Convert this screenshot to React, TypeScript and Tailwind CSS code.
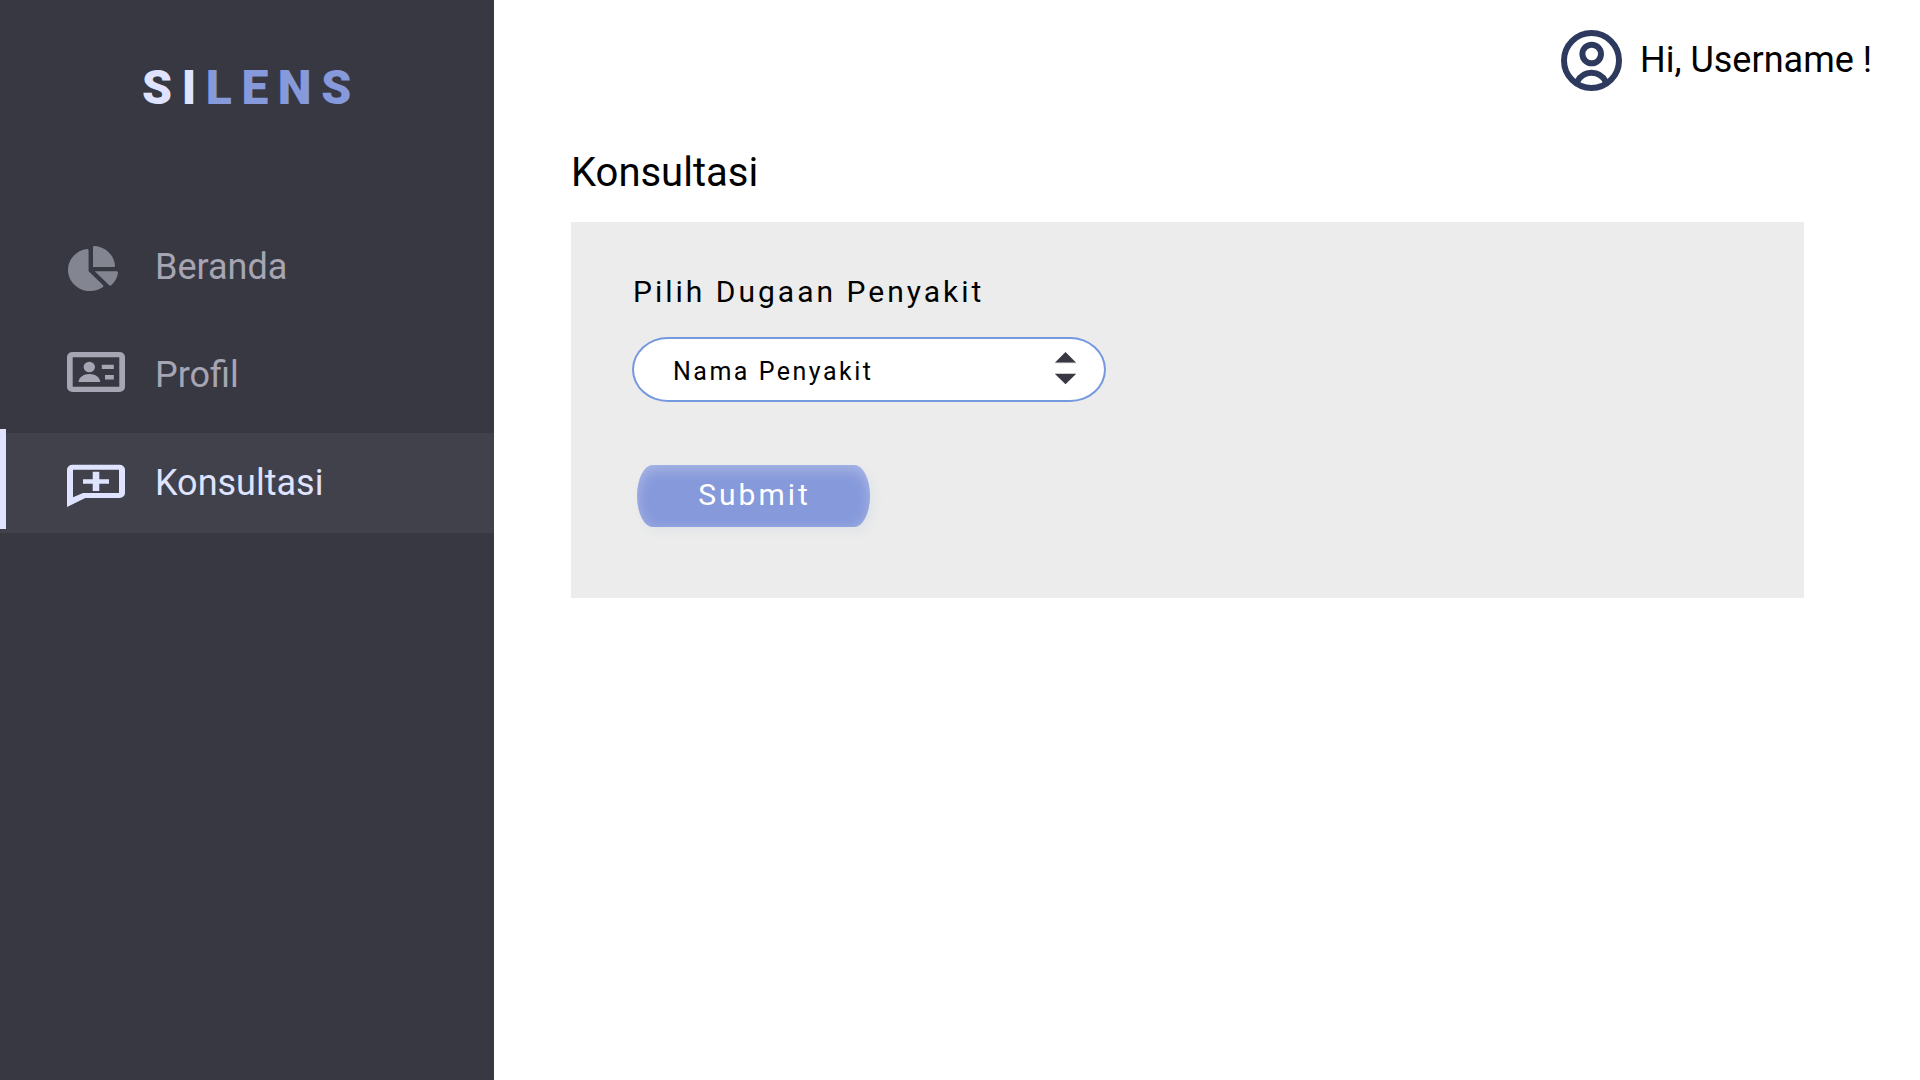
import type { ReactNode } from "react";

function PieIcon() {
  return (
    <svg width="50" height="45" viewBox="0 0 544 512" preserveAspectRatio="none" fill="#838590">
      <path d="M527.79 288H290.5l158.03 158.03c6.04 6.04 15.98 6.53 22.19.68 38.7-36.46 65.32-85.61 73.13-140.86 1.34-9.46-6.51-17.85-16.06-17.85zm-15.83-64.8C503.72 103.74 408.26 8.28 288.8.04 279.68-.59 272 7.1 272 16.24V240h223.77c9.14 0 16.82-7.68 16.19-16.8zM224 288V50.71c0-9.55-8.39-17.4-17.84-16.06C86.99 51.49-4.1 155.6.14 280.37 4.5 408.51 114.83 513.59 243.03 511.98c50.4-.63 96.97-16.87 135.26-44.03 7.9-5.6 8.42-17.23 1.57-24.08L224 288z" />
    </svg>
  );
}

function IdCardIcon() {
  return (
    <svg width="58" height="40" viewBox="0 0 58 40" fill="#a5a5b4">
      <path
        fillRule="evenodd"
        d="M5.5 0h47A5.5 5 0 0 1 58 5v30a5.5 5 0 0 1-5.5 5h-47A5.5 5 0 0 1 0 35V5A5.5 5 0 0 1 5.5 0zM5.7 5.2v29.6h46.6V5.2z"
      />
      <ellipse cx="22.3" cy="15" rx="5.7" ry="5.2" />
      <path d="M11.5 30C12 25 16.5 22 22.4 22S32.8 25 33.3 30z" />
      <path d="M34.8 12.7h12v4.4h-12zM38 23h8.8v4.5H38z" />
    </svg>
  );
}

function ConsultIcon() {
  return (
    <svg width="58" height="43" viewBox="0 0 58 43" fill="#dfe3ff">
      <path
        fillRule="evenodd"
        d="M5.5 .7h47A5.5 5 0 0 1 58 5.7v23.3a5.5 5 0 0 1-5.5 5H18.3L0 43V5.7A5.5 5 0 0 1 5.5 .7zM6 5.7v27.6L16 28.9h36V5.7z"
      />
      <path d="M25.7 7.7h6.6v7.5H42v4.6h-9.7V27h-6.6v-7.2H16v-4.6h9.7z" />
    </svg>
  );
}

function AvatarIcon() {
  return (
    <svg width="61" height="61" viewBox="0 0 61 61" fill="none" stroke="#2d3a5e" strokeWidth="6">
      <circle cx="30.5" cy="30.5" r="27.5" />
      <circle cx="30.7" cy="24" r="9.3" />
      <path d="M16 52C19 46 24 42.7 30.5 42.7S42 46 45 52" />
    </svg>
  );
}

function NavItem({ icon, label, active }: { icon: ReactNode; label: string; active?: boolean }) {
  return (
    <li
      className={
        active
          ? "relative flex h-[100px] items-center bg-[#41414b] pl-[67px] text-[#dfe3ff]"
          : "flex h-[100px] items-center pl-[67px] text-[#a5a5b4]"
      }
    >
      {active && <span className="absolute -top-1 left-0 h-[100px] w-1.5 bg-[#dfe3ff]" />}
      <span className="flex w-[88px] shrink-0">{icon}</span>
      <span className="text-[36px] leading-[48px]">{label}</span>
    </li>
  );
}

export default function App() {
  return (
    <div className="flex h-[1080px] w-[1920px] overflow-hidden bg-white font-['Roboto',sans-serif] text-black">
      <aside className="w-[494px] shrink-0 bg-[#383842]">
        <div className="flex h-[217px] items-start pt-[58px] pl-[142px] text-[48px] leading-[60px] font-black tracking-[0.2em] text-[#8699db]">
          <span className="text-[#dfe3ff]">SI</span>
          <span>LENS</span>
        </div>
        <ul className="flex flex-col gap-2">
          <NavItem icon={<span className="mt-0.5 ml-px"><PieIcon /></span>} label="Beranda" />
          <NavItem icon={<span className="-mt-1.5"><IdCardIcon /></span>} label="Profil" />
          <NavItem icon={<span className="mt-1"><ConsultIcon /></span>} label="Konsultasi" active />
        </ul>
      </aside>
      <main className="flex-1">
        <header className="flex h-[121px] items-start pt-[30px] pl-[1067px]">
          <AvatarIcon />
          <span className="ml-[18px] text-[36px] leading-[60px] whitespace-nowrap">Hi, Username !</span>
        </header>
        <div className="ml-[77px] w-[1233px]">
          <h1 className="h-[101px] pt-[28px] text-[40px] leading-[48px]">Konsultasi</h1>
          <section className="h-[376px] bg-[#ececec] pt-[50px] pl-[61px]">
            <h2 className="pl-px text-[30px] leading-[40px] tracking-[0.1em]">Pilih Dugaan Penyakit</h2>
            <div className="mt-[25px] flex h-[65px] w-[474px] items-center justify-between rounded-[36px/50%] border-2 border-[#7598df] bg-white pr-[28px] pl-[39px]">
              <span className="pt-[5px] text-[25px] leading-[32px] tracking-[0.1em]">Nama Penyakit</span>
              <svg width="21" height="33" viewBox="0 0 21 33" fill="#383842" className="-mt-0.5">
                <path d="M0 10.3h21v1H0zM0 21h21v1H0z" fill="#c9cccd" />
                <path d="M0 10.5L10.5 0L21 10.5zM0 22L10.5 32.3L21 22z" />
              </svg>
            </div>
            <button className="mt-[63px] ml-[5px] flex h-[62px] w-[233px] items-center justify-center rounded-[16px/50%] bg-[#8699db] pb-1 pl-0.5 text-[30px] tracking-[0.1em] text-white shadow-[4px_5px_10px_rgba(180,200,215,0.2),inset_0_4px_14px_rgba(255,255,255,0.32)]">
              Submit
            </button>
          </section>
        </div>
      </main>
    </div>
  );
}
